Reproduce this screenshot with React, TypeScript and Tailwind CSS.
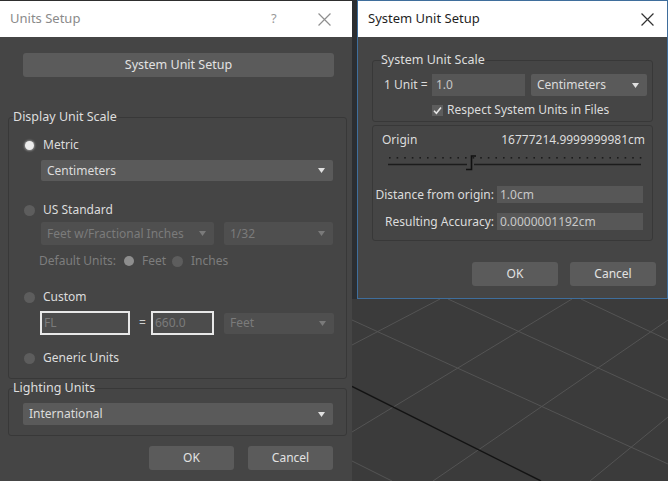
import React from 'react';

const font = { fontFamily: '"Noto Sans", "Open Sans", sans-serif' };

function Arrow({ dim }: { dim?: boolean }) {
    return (
        <svg width="7" height="5" viewBox="0 0 7 5" className="shrink-0">
            <polygon points="0,0 7,0 3.5,5" fill={dim ? '#7a7a7a' : '#e0e0e0'} />
        </svg>
    );
}

function Dropdown({ label, dim, className }: { label: string; dim?: boolean; className: string }) {
    return (
        <div
            className={
                'flex items-center justify-between pl-[6px] pr-[8px] rounded-[2px] ' +
                (dim ? 'bg-[#4f4f4f] text-[#7b7b7b] ' : 'bg-[#5a5a5a] text-[#dcdcdc] ') +
                className
            }
        >
            <span>{label}</span>
            <Arrow dim={dim} />
        </div>
    );
}

function Radio({ state }: { state: 'on' | 'off' | 'dimOn' }) {
    if (state === 'on')
        return <span className="block w-[9px] h-[9px] rounded-full bg-[#ececec] shadow-[0_0_2px_1px_#8a8a8a] shrink-0" />;
    if (state === 'dimOn') return <span className="block w-[10px] h-[10px] rounded-full bg-[#8e8e8e] shrink-0" />;
    return <span className="block w-[11px] h-[11px] rounded-full bg-[#5d5d5d] shrink-0" />;
}

function Btn({ label, className }: { label: string; className: string }) {
    return (
        <div className={'flex items-center justify-center rounded-[3px] bg-[#5b5b5b] text-[#e2e2e2] ' + className}>
            {label}
        </div>
    );
}

function CloseX({ color, size }: { color: string; size: number }) {
    return (
        <svg width={size} height={size} viewBox="0 0 12 12">
            <path d="M0.5 0.5 L11.5 11.5 M11.5 0.5 L0.5 11.5" stroke={color} strokeWidth="1.1" />
        </svg>
    );
}

function UnitsSetup() {
    return (
        <div className="w-[352px] h-full shrink-0 bg-[#454545] border-t border-[#2e2e2e] flex flex-col text-[12px] text-[#dcdcdc]">
            <div className="h-[36px] bg-white flex items-center pl-[10px] text-[13px] text-[#8a8a8a]">
                <span className="flex-1">Units Setup</span>
                <span className="w-[12px] mr-[35px] text-[#9a9a9a]">?</span>
                <span className="mr-[21px] flex">
                    <CloseX color="#8f8f8f" size={13} />
                </span>
            </div>
            <div className="px-[8px] flex flex-col">
                <Btn label="System Unit Setup" className="mt-[16px] h-[24px] ml-[15px] w-[311px] text-[12.5px]" />

                <fieldset className="mt-[32px] w-[339px] border border-[#383838] rounded-[3px] pb-[10px]">
                    <legend className="ml-[4px] leading-[16px] text-[12.5px] text-[#dedede]">Display Unit Scale</legend>
                    <div className="mt-[10px] h-[20px] flex items-center pl-[16px] gap-[9px]">
                        <Radio state="on" />
                        <span>Metric</span>
                    </div>
                    <Dropdown label="Centimeters" className="mt-[5px] ml-[32px] w-[292px] h-[21px]" />
                    <div className="mt-[19px] h-[20px] flex items-center pl-[15px] gap-[8px]">
                        <Radio state="off" />
                        <span>US Standard</span>
                    </div>
                    <div className="mt-[2px] ml-[32px] flex gap-[10px]">
                        <Dropdown label="Feet w/Fractional Inches" dim className="w-[173px] h-[23px]" />
                        <Dropdown label="1/32" dim className="w-[109px] h-[23px]" />
                    </div>
                    <div className="mt-[6px] h-[20px] flex items-center ml-[30px] text-[#7d7d7d]">
                        <span>Default Units:</span>
                        <span className="ml-[8px]">
                            <Radio state="dimOn" />
                        </span>
                        <span className="ml-[8px]">Feet</span>
                        <span className="ml-[6px]">
                            <Radio state="off" />
                        </span>
                        <span className="ml-[8px]">Inches</span>
                    </div>
                    <div className="mt-[16px] h-[20px] flex items-center pl-[15px] gap-[8px]">
                        <Radio state="off" />
                        <span>Custom</span>
                    </div>
                    <div className="mt-[4px] ml-[31px] flex items-center">
                        <div className="w-[90px] h-[24px] border-2 border-[#e8e8e8] bg-[#4c4c4c] text-[#7b7b7b] flex items-center pl-[2px]">
                            FL
                        </div>
                        <span className="ml-[9px] w-[12px] text-[#cfcfcf]">=</span>
                        <div className="w-[63px] h-[24px] border-2 border-[#e8e8e8] bg-[#4c4c4c] text-[#7b7b7b] flex items-center pl-[2px]">
                            660.0
                        </div>
                        <Dropdown label="Feet" dim className="ml-[10px] w-[110px] h-[21px]" />
                    </div>
                    <div className="mt-[13px] h-[20px] flex items-center pl-[15px] gap-[8px]">
                        <Radio state="off" />
                        <span>Generic Units</span>
                    </div>
                </fieldset>

                <fieldset className="mt-[1px] w-[339px] border border-[#383838] rounded-[3px] pb-[10px]">
                    <legend className="ml-[4px] leading-[16px] text-[12.5px] text-[#dedede]">Lighting Units</legend>
                    <Dropdown label="International" className="mt-[7px] ml-[14px] w-[310px] h-[22px]" />
                </fieldset>

                <div className="mt-[10px] flex justify-end gap-[14px] pr-[11px]">
                    <Btn label="OK" className="w-[85px] h-[24px]" />
                    <Btn label="Cancel" className="w-[85px] h-[24px]" />
                </div>
            </div>
        </div>
    );
}

function OriginSlider() {
    const dots = [];
    for (let x = 16; x <= 269; x += 7.6) dots.push(x);
    return (
        <svg width="279" height="22" className="block">
            {dots.map((x, i) => (
                <rect key={i} x={x} y={6} width={1.6} height={1.6} fill="#1c1c1c" />
            ))}
            <line x1="15" y1="13.5" x2="94" y2="13.5" stroke="#1c1c1c" strokeWidth="1.3" />
            <line x1="101" y1="13.5" x2="268" y2="13.5" stroke="#1c1c1c" strokeWidth="1.3" />
            <path d="M93 18.5 H98.5 V5 H103" fill="none" stroke="#111" strokeWidth="1.6" />
        </svg>
    );
}

function SystemUnitSetup() {
    return (
        <div className="ml-[5px] w-[311px] h-[299px] border border-[#3f6e9c] bg-[#454545] flex flex-col text-[12px] text-[#dcdcdc]">
            <div className="h-[36px] bg-white flex items-center pl-[10px] pr-[13px] text-[13px] text-[#1f1f1f]">
                <span className="flex-1">System Unit Setup</span>
                <CloseX color="#333" size={13} />
            </div>
            <div className="pl-[14px] flex flex-col">
                <fieldset className="mt-[15px] w-[281px] border border-[#383838] rounded-[3px] pb-[4px]">
                    <legend className="ml-[8px] leading-[16px] text-[12.5px] text-[#dedede]">System Unit Scale</legend>
                    <div className="mt-[6px] h-[22px] flex items-center pl-[11px]">
                        <span className="w-[48px]">1 Unit =</span>
                        <div className="w-[93px] h-[22px] bg-[#565656] text-[#c6c6c6] flex items-center pl-[4px]">1.0</div>
                        <Dropdown label="Centimeters" className="ml-[6px] w-[116px] h-[22px]" />
                    </div>
                    <div className="mt-[7px] h-[14px] flex items-center ml-[59px] gap-[4px]">
                        <span className="w-[11px] h-[11px] bg-[#5d5d5d] flex items-center justify-center">
                            <svg width="9" height="9" viewBox="0 0 9 9">
                                <path d="M1 4.8 L3.4 7.2 L8 1.5" fill="none" stroke="#e4e4e4" strokeWidth="1.6" />
                            </svg>
                        </span>
                        <span>Respect System Units in Files</span>
                    </div>
                </fieldset>

                <div className="mt-[3px] w-[281px] border border-[#383838] rounded-[3px] pt-[6px] pb-[10px]">
                    <div className="h-[16px] flex items-center justify-between pl-[9px] pr-[7px]">
                        <span>Origin</span>
                        <span>16777214.9999999981cm</span>
                    </div>
                    <div className="mt-[3px]">
                        <OriginSlider />
                    </div>
                    <div className="mt-[13px] h-[17px] flex items-center">
                        <span className="w-[121px] text-right">Distance from origin:</span>
                        <div className="ml-[3px] w-[146px] h-[17px] bg-[#575757] text-[#c8c8c8] flex items-center pl-[3px]">
                            1.0cm
                        </div>
                    </div>
                    <div className="mt-[10px] h-[17px] flex items-center">
                        <span className="w-[121px] text-right">Resulting Accuracy:</span>
                        <div className="ml-[3px] w-[146px] h-[17px] bg-[#575757] text-[#c8c8c8] flex items-center pl-[3px]">
                            0.0000001192cm
                        </div>
                    </div>
                </div>

                <div className="mt-[21px] flex justify-end gap-[12px] pr-[11px]">
                    <Btn label="OK" className="w-[86px] h-[24px]" />
                    <Btn label="Cancel" className="w-[86px] h-[24px]" />
                </div>
            </div>
        </div>
    );
}

function Viewport() {
    const grid = [
        [0, 21, 316, 165],
        [96, 0, 316, 101],
        [229, 0, 316, 41],
        [0, 162, 40, 182],
        [0, 46, 88, 0],
        [0, 133, 220, 0],
        [81, 182, 316, 21],
        [238, 182, 316, 118],
    ];
    return (
        <svg width="316" height="182" className="block bg-[#3b3b3b]">
            {grid.map(([x1, y1, x2, y2], i) => (
                <line key={i} x1={x1} y1={y1} x2={x2} y2={y2} stroke="#545454" strokeWidth="1" />
            ))}
            <line x1="0" y1="87.5" x2="189" y2="182" stroke="#141414" strokeWidth="1.4" />
        </svg>
    );
}

export default function App() {
    return (
        <div className="w-[668px] h-[481px] flex overflow-hidden bg-[#2c2e31]" style={font}>
            <UnitsSetup />
            <div className="flex flex-col">
                <SystemUnitSetup />
                <Viewport />
            </div>
        </div>
    );
}
